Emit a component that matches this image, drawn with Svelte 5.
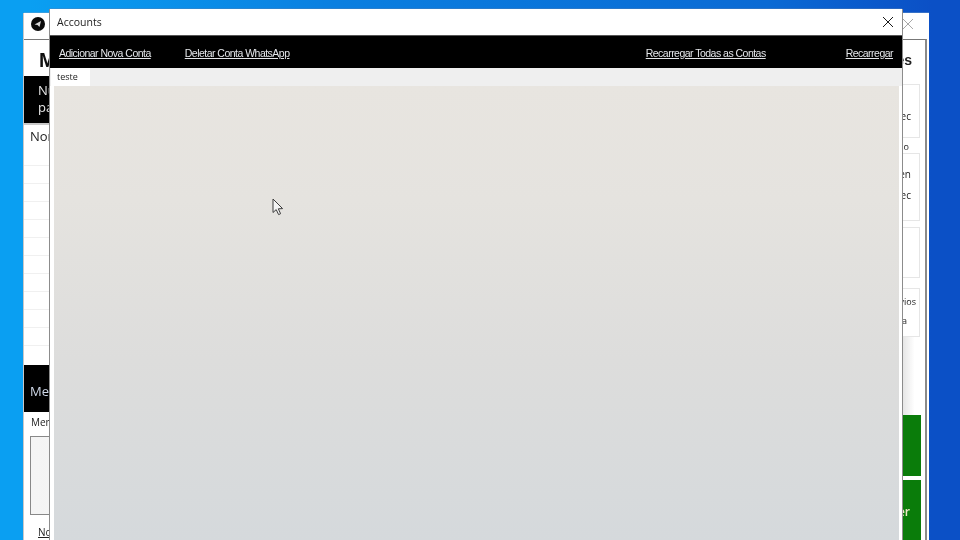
<script>
  const rows = Array.from({ length: 11 });
</script>

<div class="desktop">
  <section class="win back">
    <header class="back-title">
      <span class="logo"><svg viewBox="0 0 14 14" width="14" height="14"><circle cx="7" cy="7" r="7" fill="#0a0a0a"/><path d="M3.5 7.5 10 4 8.5 10 6.5 8z" fill="#d8d8d8"/></svg></span>
      <svg class="back-x" viewBox="0 0 10 10" width="10" height="10"><path d="M0 0 10 10M10 0 0 10" stroke="#a8a8a8" stroke-width="1" fill="none"/></svg>
    </header>
    <div class="panel">
      <div class="left">
        <h2>Mensagens</h2>
        <div class="band top-band">Numeros<br />para</div>
        <div class="table">
          <div class="th">Nome</div>
          {#each rows as _}<div class="row"></div>{/each}
        </div>
        <div class="band msg-band">Mensagem</div>
        <div class="msg-label">Mensagem</div>
        <div class="textarea"></div>
        <div class="note">Nota</div>
      </div>
      <div class="right">
        <h3>Opções</h3>
        <div class="box b1"><span>Exec</span></div>
        <div class="cap">Intervalo</div>
        <div class="box b2"><span>Tempo en</span><span>Exec</span></div>
        <div class="box b3"></div>
        <div class="box b4"><span class="envios">Envios</span><span>Conta</span></div>
        <div class="spacer"></div>
        <div class="green g1"></div>
        <div class="green g2"><span>Fazer</span></div>
      </div>
    </div>
  </section>

  <section class="win front">
    <header class="front-title">
      <span>Accounts</span>
      <svg viewBox="0 0 10 10" width="10" height="10"><path d="M0 0 10 10M10 0 0 10" stroke="#1a1a1a" stroke-width="1" fill="none"/></svg>
    </header>
    <nav class="menu">
      <a class="m1" href="#a">Adicionar Nova Conta</a>
      <a class="m2" href="#b">Deletar Conta WhatsApp</a>
      <a class="m3" href="#c">Recarregar Todas as Contas</a>
      <a class="m4" href="#d">Recarregar</a>
    </nav>
    <div class="tabs"><span class="tab">teste</span></div>
    <div class="content"></div>
  </section>

  <svg class="cursor" viewBox="0 0 12 18" width="12" height="18">
    <path d="M1 1 1 14.5 4.2 11.6 6.6 16.6 8.6 15.7 6.3 10.8 10.6 10.6z" fill="#f4f4f4" stroke="#3c3c3c" stroke-width="1" stroke-linejoin="round"/>
  </svg>
</div>

<style>
  :global(body) { margin: 0; }
  .desktop {
    position: relative;
    width: 960px;
    height: 540px;
    overflow: hidden;
    font-family: "Open Sans", "Liberation Sans", sans-serif;
    background: linear-gradient(90deg, #0a9ff2 0, #0a9ff2 3%, #0b7fe0 35%, #0a6ad4 80%, #0b50c6 97%);
    filter: blur(0.35px);
  }
  .win { position: absolute; display: flex; flex-direction: column; }
  .back {
    left: 24px;
    top: 13px;
    width: 905px;
    height: 527px;
    background: #fff;
    box-shadow: -1px 0 0 #c8c8c8, 0 -1px 0 rgba(120, 160, 200, 0.4);
  }
  .back-title {
    height: 26px;
    flex: none;
    display: flex;
    align-items: center;
    justify-content: space-between;
    padding: 0 16px 4px 7px;
    box-sizing: border-box;
    background: #fff;
  }
  .logo { display: flex; }
  .panel {
    flex: 1;
    display: flex;
    min-height: 0;
    width: 903px;
    box-sizing: border-box;
    border-top: 1px solid #777;
    border-right: 2px solid #8a8a8a;
  }
  .left { flex: 1; min-width: 0; display: flex; flex-direction: column; }
  h2 {
    margin: 0;
    height: 36px;
    padding-left: 15px;
    font: bold 20px/40px "Liberation Sans", sans-serif;
    color: #111;
  }
  .band {
    flex: none;
    background: #000;
    color: #e8e8e8;
    font-size: 13px;
    box-sizing: border-box;
  }
  .top-band { height: 47px; padding: 6px 0 0 14px; line-height: 17px; }
  .table { height: 242px; flex: none; overflow: hidden; border-top: 2px solid #c8c8c8; box-sizing: border-box; }
  .th { height: 40px; padding: 2px 0 0 6px; font-size: 13px; color: #222; box-sizing: border-box; }
  .row { height: 18px; border-top: 1px solid #f0f0f0; box-sizing: border-box; }
  .msg-band { height: 47px; padding: 16px 0 0 6px; line-height: 20px; color: #cfd8e8; }
  .msg-label { height: 24px; padding: 3px 0 0 7px; font-size: 10px; color: #222; box-sizing: border-box; }
  .textarea { height: 79px; margin-left: 6px; border: 1px solid #888; background: linear-gradient(90deg, #f4f4f4, #fff 40%); box-sizing: border-box; }
  .note { margin: 10px 0 0 14px; font-size: 10px; color: #222; text-decoration: underline; }
  .right {
    flex: none;
    width: 110px;
    padding-right: 4px;
    box-sizing: border-box;
    display: flex;
    flex-direction: column;
    align-items: stretch;
    font-size: 10px;
    color: #222;
    text-align: right;
  }
  h3 { margin: 0; height: 44px; padding: 12px 9px 0 0; box-sizing: border-box; font: bold 14px "Liberation Sans", sans-serif; color: #222; }
  .box {
    box-sizing: border-box;
    border: 1px solid #e6e6e6;
    margin-right: 1px;
    padding-right: 8px;
    display: flex;
    flex-direction: column;
  }
  .b1 { height: 54px; justify-content: flex-end; padding-bottom: 14px; }
  .cap { height: 15px; line-height: 18px; padding-right: 12px; font-size: 9px; }
  .b2 { height: 68px; padding-top: 13px; gap: 7px; line-height: 14px; }
  .b3 { height: 51px; margin-top: 6px; }
  .b4 { height: 49px; margin-top: 10px; padding: 7px 12px 0 0; gap: 7px; line-height: 12px; font-size: 9px; }
  .envios { margin-right: -9px; }
  .spacer { flex: 1; background: linear-gradient(90deg, #e4e4e4 82%, #fff 94%); }
  .green { flex: none; background: #0a7c0a; }
  .g1 { height: 61px; margin-bottom: 4px; }
  .g2 { height: 60px; padding: 23px 11px 0 0; font-size: 12px; font-weight: 600; color: #efe9c8; box-sizing: border-box; }

  .front {
    left: 50px;
    top: 9px;
    width: 852px;
    height: 531px;
    background: #fff;
    box-shadow: -1px 0 0 #8c8c8c, 1px 0 0 #8c8c8c, 0 -1px 0 rgba(90, 130, 180, 0.4);
  }
  .front-title {
    height: 26px;
    flex: none;
    display: flex;
    align-items: center;
    justify-content: space-between;
    padding: 0 9px 0 7px;
    font-size: 10.5px;
    color: #222;
  }
  .menu {
    height: 33px;
    flex: none;
    background: #000;
    border-top: 1px solid #555;
    box-sizing: border-box;
    display: flex;
    align-items: center;
    padding: 2px 9px 0 9px;
  }
  .menu a {
    color: #e4e6ea;
    font: 10.5px "Liberation Sans", sans-serif;
    letter-spacing: -0.52px;
    text-decoration: underline;
    white-space: nowrap;
  }
  .m2 { margin-left: 34px; }
  .m3 { margin-left: auto; }
  .m4 { margin-left: 80px; }
  .tabs {
    height: 18px;
    flex: none;
    background: #efefef;
    display: flex;
    padding-left: 1px;
  }
  .tab {
    width: 39px;
    background: #fff;
    padding-left: 6px;
    box-sizing: border-box;
    font-size: 9px;
    line-height: 17px;
    color: #222;
  }
  .content {
    flex: 1;
    margin: 0 3px 0 4px;
    background: linear-gradient(180deg, #e8e5e0 0, #e5e3df 25%, #dddddc 60%, #d5d9dc 100%);
  }
  .cursor { position: absolute; left: 272px; top: 198px; }
</style>
